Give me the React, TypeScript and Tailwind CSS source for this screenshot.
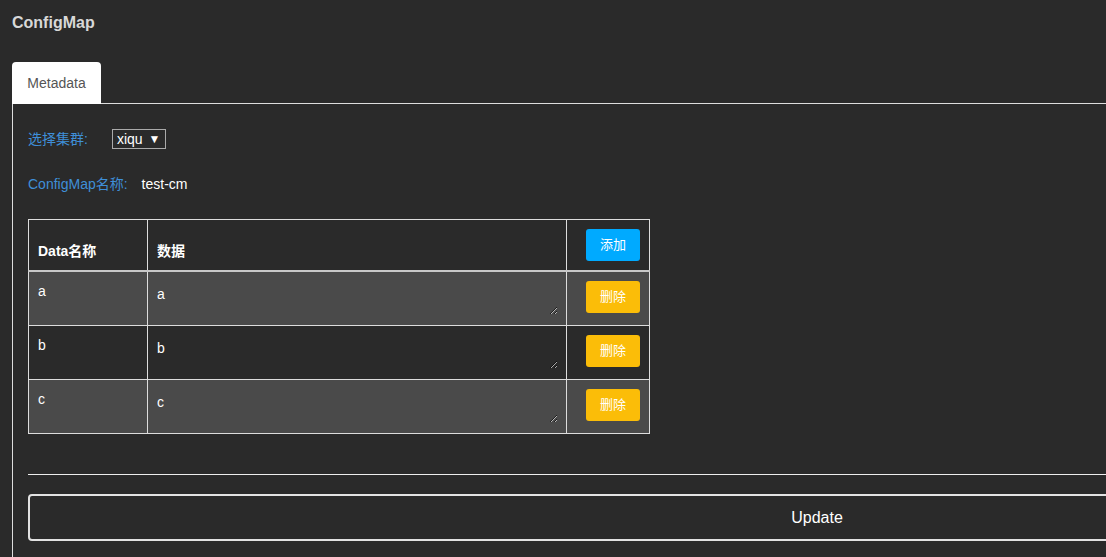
import { useState } from 'react'

type Row = { name: string; data: string }

const font = "font-['Liberation_Sans','Noto_Sans_CJK_SC',sans-serif]"

export default function App() {
  const [rows, setRows] = useState<Row[]>([
    { name: 'a', data: 'a' },
    { name: 'b', data: 'b' },
    { name: 'c', data: 'c' },
  ])

  return (
    <div className={`w-[1106px] h-[557px] overflow-hidden bg-[#2a2a2a] ${font}`}>
      <div className="w-[1640px] pl-[12px]">
        {/* 标题 */}
        <h1 className="pt-[13px] text-[16px] leading-[20px] font-bold text-[#d8d8d8]">ConfigMap</h1>

        {/* Tabs */}
        <div className="mt-[29px] flex border-b border-[#dddddd]">
          <div className="-mb-px h-[42px] w-[89px] justify-center flex items-center bg-white rounded-t-[4px] text-[14px] text-[#555555]">
            Metadata
          </div>
        </div>

        {/* 面板 */}
        <div className="border-l border-[#dddddd] pl-[15px] pt-[25px] pb-[20px]">
          <div className="flex items-center h-[20px] text-[14px]">
            <span className="text-[#3f8fd8] mr-[24px]">选择集群:</span>
            <div className="h-[20px] w-[54px] border border-[#aaaaaa] flex items-center pl-[4px] text-white text-[14px] leading-none">
              xiqu<span className="ml-[6px] text-[12px]">▼</span>
            </div>
          </div>

          <div className="mt-[25px] flex items-center h-[20px] text-[14px]">
            <span className="text-[#3f8fd8] mr-[14px]">ConfigMap名称:</span>
            <span className="text-white">test-cm</span>
          </div>

          <table className="mt-[25px] border-collapse w-[621px] text-[14px] text-white table-fixed">
            <colgroup>
              <col className="w-[119px]" />
              <col className="w-[419px]" />
              <col className="w-[83px]" />
            </colgroup>
            <thead>
              <tr className="h-[51px]">
                <th className="border border-[#dddddd] border-b-2 border-b-[#c8c8c8] align-bottom text-left font-bold px-[9px] pb-[8px]">Data名称</th>
                <th className="border border-[#dddddd] border-b-2 border-b-[#c8c8c8] align-bottom text-left font-bold px-[9px] pb-[8px]">数据</th>
                <th className="border border-[#dddddd] border-b-2 border-b-[#c8c8c8] align-top pl-[19px] pt-[9px]">
                  <button
                    onClick={() => setRows([...rows, { name: '', data: '' }])}
                    className="block w-[54px] h-[32px] rounded-[3px] bg-[#00aaff] text-white text-[13px] font-normal"
                  >
                    添加
                  </button>
                </th>
              </tr>
            </thead>
            <tbody>
              {rows.map((r, i) => (
                <tr key={i} className={`${i === 0 ? 'h-[55px]' : 'h-[54px]'} ${i % 2 === 0 ? 'bg-[#4a4a4a]' : 'bg-[#2a2a2a]'}`}>
                  <td className="border border-[#dddddd] align-top px-[9px] pt-[9px]">{r.name}</td>
                  <td className="border border-[#dddddd] align-top pl-[9px] pr-[8px] pt-[9px]">
                    <textarea
                      value={r.data}
                      onChange={e => setRows(rows.map((x, j) => (j === i ? { ...x, data: e.target.value } : x)))}
                      className="block w-full h-[34px] bg-transparent text-white text-[14px] leading-[20px] px-0 pt-[3px] outline-none [color-scheme:dark]"
                    />
                  </td>
                  <td className="border border-[#dddddd] align-top pl-[19px] pt-[9px]">
                    <button
                      onClick={() => setRows(rows.filter((_, j) => j !== i))}
                      className="block w-[54px] h-[32px] rounded-[3px] bg-[#fbbd08] text-white text-[13px]"
                    >
                      删除
                    </button>
                  </td>
                </tr>
              ))}
            </tbody>
          </table>

          <hr className="mt-[40px] border-t border-[#eeeeee]" />

          <button className="mt-[19px] w-[1578px] h-[47px] border-2 border-[#e2e2e2] rounded-[4px] text-[16px] text-white">
            Update
          </button>
        </div>
      </div>
    </div>
  )
}
